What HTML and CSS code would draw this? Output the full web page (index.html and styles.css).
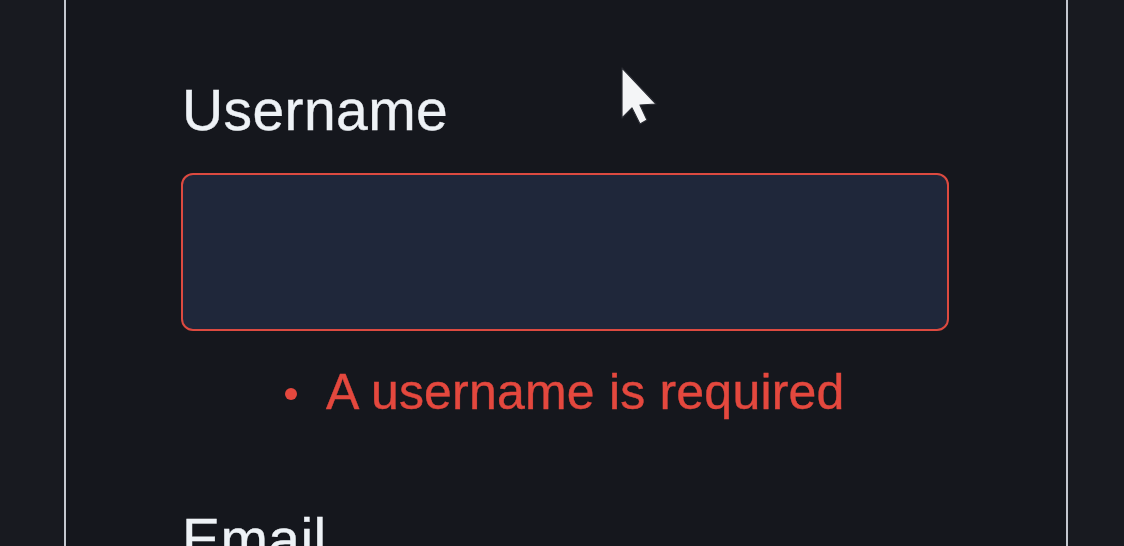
FILE: index.html
```html
<!DOCTYPE html>
<html lang="en">
<head>
<meta charset="utf-8">
<title>Sign up</title>
<link rel="stylesheet" href="styles.css">
</head>
<body>
<div class="page">
  <form class="card">
    <div class="field">
      <label class="label" for="username">Username</label>
      <input class="input input-error" id="username" type="text">
      <ul class="errors">
        <li class="error"><span class="dot"></span>A username is required</li>
      </ul>
    </div>
    <div class="field">
      <label class="label" for="email">Email</label>
    </div>
  </form>
  <svg class="cursor" width="36" height="58" viewBox="0 0 36 58" aria-hidden="true">
    <path d="M1 1 L1 51 L11 41 L19 57 L26 53 L19 38 L35 37 Z" fill="#f4f5f7" stroke="#2a2c33" stroke-width="1.2" stroke-linejoin="round"/>
  </svg>
</div>
</body>
</html>
```

FILE: styles.css
```css
html, body {
  margin: 0;
  padding: 0;
  height: 100%;
  overflow: hidden;
}

body {
  background: #181a20;
  font-family: "Liberation Sans", Arial, sans-serif;
}

.page {
  position: relative;
  height: 100%;
  padding-left: 64px;
}

.card {
  box-sizing: border-box;
  width: 1004px;
  height: 100%;
  background: #15171d;
  border-left: 2px solid #c3c7cf;
  border-right: 2px solid #c3c7cf;
  padding: 77px 0 0 115px;
}

.field {
  display: flex;
  flex-direction: column;
  align-items: flex-start;
}

.label {
  margin-left: 1px;
  font-size: 57px;
  line-height: 66px;
  letter-spacing: 0.4px;
  color: #eef2f6;
  -webkit-text-stroke: 0.4px #eef2f6;
}

.input {
  box-sizing: border-box;
  margin-top: 30px;
  width: 768px;
  height: 158px;
  border-radius: 12px;
  background: #1f273a;
  border: 2px solid #3a4355;
  outline: none;
}

.input-error {
  border-color: #dc4a40;
}

.errors {
  list-style: none;
  margin: 32px 0 0 104px;
  padding: 0;
}

.error {
  display: flex;
  align-items: center;
  font-size: 50px;
  line-height: 58px;
  color: #e4483e;
  letter-spacing: 0.2px;
  -webkit-text-stroke: 0.4px #e4483e;
}

.dot {
  width: 12px;
  height: 12px;
  border-radius: 50%;
  background: #e4483e;
  margin: 4px 29px 0 0;
  flex: none;
}

.field + .field {
  margin-top: 85px;
}

.cursor {
  position: absolute;
  left: 621px;
  top: 67px;
}
```
